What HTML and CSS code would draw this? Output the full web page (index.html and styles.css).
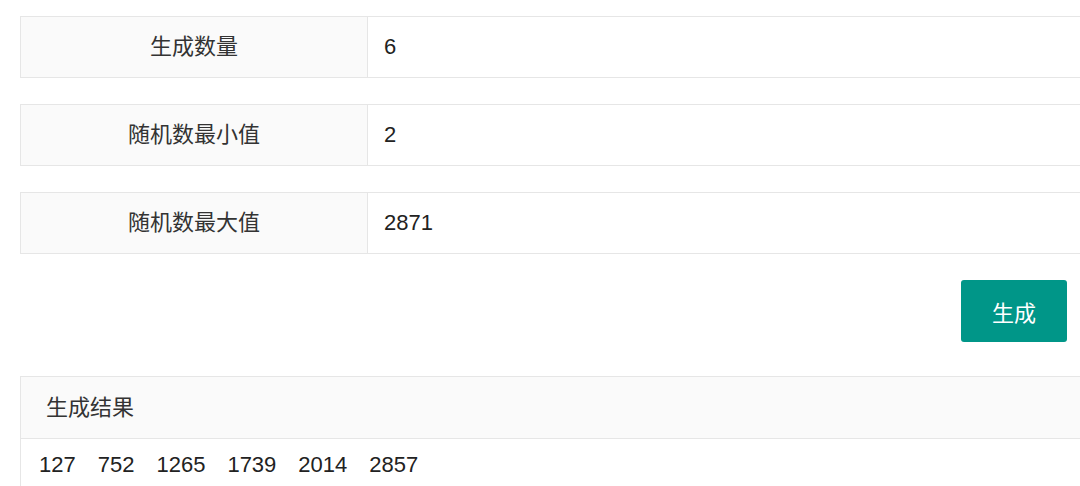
FILE: index.html
```html
<!DOCTYPE html>
<html lang="zh-CN">
<head>
    <meta charset="UTF-8">
    <meta name="viewport" content="width=device-width, initial-scale=1.0">
    <title>随机数生成</title>
    <link rel="stylesheet" href="styles.css">
</head>
<body>
    <div class="page">
        <form class="form" onsubmit="return false">
            <div class="form-item">
                <label class="form-label" for="count">生成数量</label>
                <input class="form-input" type="text" id="count" value="6">
            </div>
            <div class="form-item">
                <label class="form-label" for="min">随机数最小值</label>
                <input class="form-input" type="text" id="min" value="2">
            </div>
            <div class="form-item">
                <label class="form-label" for="max">随机数最大值</label>
                <input class="form-input" type="text" id="max" value="2871">
            </div>
            <div class="form-actions">
                <button class="btn" type="button">生成</button>
            </div>
        </form>

        <div class="card">
            <div class="card-header">生成结果</div>
            <div class="card-body">
                <span>127</span>
                <span>752</span>
                <span>1265</span>
                <span>1739</span>
                <span>2014</span>
                <span>2857</span>
            </div>
        </div>
    </div>
</body>
</html>
```

FILE: styles.css
```css
body {
    margin: 0;
    overflow: hidden;
    background: #fff;
    font-family: "Liberation Sans", Arial, "Noto Sans CJK SC", sans-serif;
    color: #333;
}
.page {
    width: 1100px;
    padding: 16px 0 0 20px;
}
.form-item {
    display: flex;
    height: 62px;
    margin-bottom: 26px;
}
.form-label {
    box-sizing: border-box;
    width: 348px;
    height: 62px;
    line-height: 60px;
    text-align: center;
    font-size: 22px;
    background: #fafafa;
    border: 1px solid #e6e6e6;
}
.form-input {
    box-sizing: border-box;
    flex: 1;
    height: 62px;
    padding: 0 16px;
    font-size: 22px;
    font-family: inherit;
    color: #222;
    border: 1px solid #e6e6e6;
    border-left: none;
    outline: none;
}
.form-actions {
    display: flex;
    justify-content: flex-end;
    width: 1047px;
    margin-top: 0;
}
.btn {
    height: 62px;
    padding: 0 31px;
    font-size: 22px;
    font-family: inherit;
    color: #fff;
    background-color: #009688;
    border: none;
    border-radius: 3px;
    cursor: pointer;
}
.card {
    margin-top: 34px;
    border: 1px solid #e6e6e6;
    border-right: none;
}
.card-header {
    height: 61px;
    line-height: 61px;
    padding-left: 25px;
    font-size: 22px;
    background: #fafafa;
    border-bottom: 1px solid #e6e6e6;
}
.card-body {
    display: flex;
    gap: 22px;
    padding: 13px 18px;
    font-size: 22px;
    color: #222;
}
```
